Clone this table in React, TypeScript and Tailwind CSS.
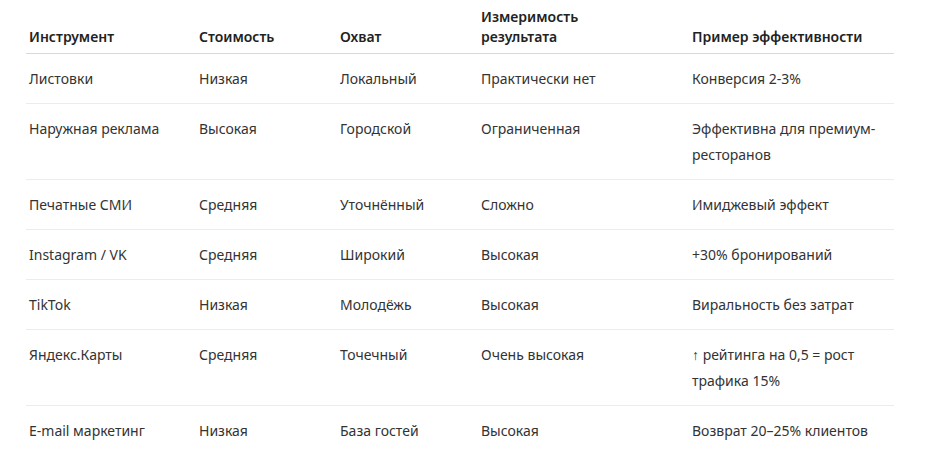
const rows: string[][] = [
  ['Листовки', 'Низкая', 'Локальный', 'Практически нет', 'Конверсия 2-3%'],
  ['Наружная реклама', 'Высокая', 'Городской', 'Ограниченная', 'Эффективна для премиум-ресторанов'],
  ['Печатные СМИ', 'Средняя', 'Уточнённый', 'Сложно', 'Имиджевый эффект'],
  ['Instagram / VK', 'Средняя', 'Широкий', 'Высокая', '+30% бронирований'],
  ['TikTok', 'Низкая', 'Молодёжь', 'Высокая', 'Виральность без затрат'],
  ['Яндекс.Карты', 'Средняя', 'Точечный', 'Очень высокая', '↑ рейтинга на 0,5 = рост трафика 15%'],
  ['E-mail маркетинг', 'Низкая', 'База гостей', 'Высокая', 'Возврат 20–25% клиентов'],
];

const headers = ['Инструмент', 'Стоимость', 'Охват', 'Измеримость результата', 'Пример эффективности'];

export default function App() {
  return (
    <div className="h-[462px] w-[928px] bg-white pl-[26px] font-['Noto_Sans',sans-serif]">
      <table className="w-[868px] table-fixed border-collapse text-[14px] text-[#333]">
        <colgroup>
          <col className="w-[170px]" />
          <col className="w-[141px]" />
          <col className="w-[141px]" />
          <col className="w-[211px]" />
          <col className="w-[205px]" />
        </colgroup>
        <thead>
          <tr className="border-b border-[#d9d9d9]">
            {headers.map((h, j) => (
              <th
                key={h}
                className="pb-[6px] pl-[3px] pr-2 pt-[7px] text-left align-bottom font-semibold leading-5 text-[#222]"
              >
                <span className={j === 3 ? 'block max-w-[140px]' : 'block'}>{h}</span>
              </th>
            ))}
          </tr>
        </thead>
        <tbody>
          {rows.map((r, i) => (
            <tr key={i} className={i < rows.length - 1 ? 'border-b border-[#ececec]' : ''}>
              {r.map((c, j) => (
                <td key={j} className="pb-[11px] pl-[3px] pr-2 pt-[12px] align-top leading-[26px]">
                  {c}
                </td>
              ))}
            </tr>
          ))}
        </tbody>
      </table>
    </div>
  );
}
